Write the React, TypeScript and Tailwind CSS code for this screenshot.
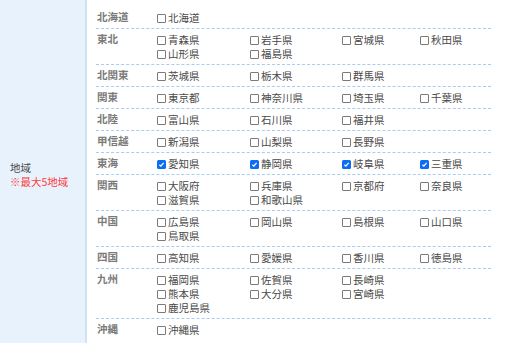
import React from 'react';

type Area = {name: string; prefs: string[]};

const areas: Area[] = [
  {name: '北海道', prefs: ['北海道']},
  {name: '東北', prefs: ['青森県', '岩手県', '宮城県', '秋田県', '山形県', '福島県']},
  {name: '北関東', prefs: ['茨城県', '栃木県', '群馬県']},
  {name: '関東', prefs: ['東京都', '神奈川県', '埼玉県', '千葉県']},
  {name: '北陸', prefs: ['富山県', '石川県', '福井県']},
  {name: '甲信越', prefs: ['新潟県', '山梨県', '長野県']},
  {name: '東海', prefs: ['愛知県', '静岡県', '岐阜県', '三重県']},
  {name: '関西', prefs: ['大阪府', '兵庫県', '京都府', '奈良県', '滋賀県', '和歌山県']},
  {name: '中国', prefs: ['広島県', '岡山県', '島根県', '山口県', '鳥取県']},
  {name: '四国', prefs: ['高知県', '愛媛県', '香川県', '徳島県']},
  {name: '九州', prefs: ['福岡県', '佐賀県', '長崎県', '熊本県', '大分県', '宮崎県', '鹿児島県']},
  {name: '沖縄', prefs: ['沖縄県']}
];

const checked = new Set(['愛知県', '静岡県', '岐阜県', '三重県']);

// 九州 wraps after 3 columns in the original
const rowsOf = (a: Area) => (a.name === '九州' ? 3 : 4);

function Box({on}: {on: boolean}) {
  if (on) {
    return (
      <span className="mr-[2px] flex h-[9px] w-[9px] shrink-0 items-center justify-center rounded-[1.5px] bg-[#0b6cf5]">
        <svg viewBox="0 0 10 10" className="h-[7px] w-[7px]" fill="none" stroke="white" strokeWidth="1.8">
          <path d="M2 5.3 4.1 7.3 8 2.6" />
        </svg>
      </span>
    );
  }
  return <span className="mr-[2px] h-[9px] w-[9px] shrink-0 rounded-[1px] border border-[#7a7a7a] bg-white" />;
}

function Pref({name}: {name: string}) {
  return (
    <label className="flex h-[14px] items-center whitespace-nowrap text-[#4a4a4a]">
      <Box on={checked.has(name)} />
      <span>{name}</span>
    </label>
  );
}

function AreaRow({area, last}: {area: Area; last: boolean}) {
  const cols = rowsOf(area);
  const rows: string[][] = [];
  for (let i = 0; i < area.prefs.length; i += cols) rows.push(area.prefs.slice(i, i + cols));
  return (
    <div className={last ? 'flex pt-[4px] pb-[3px]' : 'flex border-b border-dashed border-[#a9cdf0] pt-[4px] pb-[3px]'}>
      <div className="w-[61px] shrink-0 pl-px text-[10.5px] font-bold leading-[12px] text-[#7b7b7b]">{area.name}</div>
      <div className="flex flex-col">
        {rows.map((r, i) => (
          <div key={i} className="grid grid-cols-[93px_92px_78px_71px]">
            {r.map((p) => (
              <Pref key={p} name={p} />
            ))}
          </div>
        ))}
      </div>
    </div>
  );
}

export default function App() {
  return (
    <div
      className="flex h-[343px] w-[508px] overflow-hidden bg-white text-[10.5px] leading-[14px]"
      style={{fontFamily: '"Noto Sans CJK JP", "Noto Sans", sans-serif'}}
    >
      <div className="flex w-[87px] shrink-0 items-center border-r-2 border-[#cfe2f7] bg-[#e8f2fd] pl-[10px] pt-[6px]">
        <div className="flex flex-col gap-px leading-[13px]">
          <div className="text-[#4a4a4a]">地域</div>
          <div className="text-[#ff3a3a]">※最大5地域</div>
        </div>
      </div>
      <div className="w-[395px] pl-[9px] pt-[7px]">
        <div className="w-[395px]">
          {areas.map((a, i) => (
            <AreaRow key={a.name} area={a} last={i === areas.length - 1} />
          ))}
        </div>
      </div>
    </div>
  );
}
